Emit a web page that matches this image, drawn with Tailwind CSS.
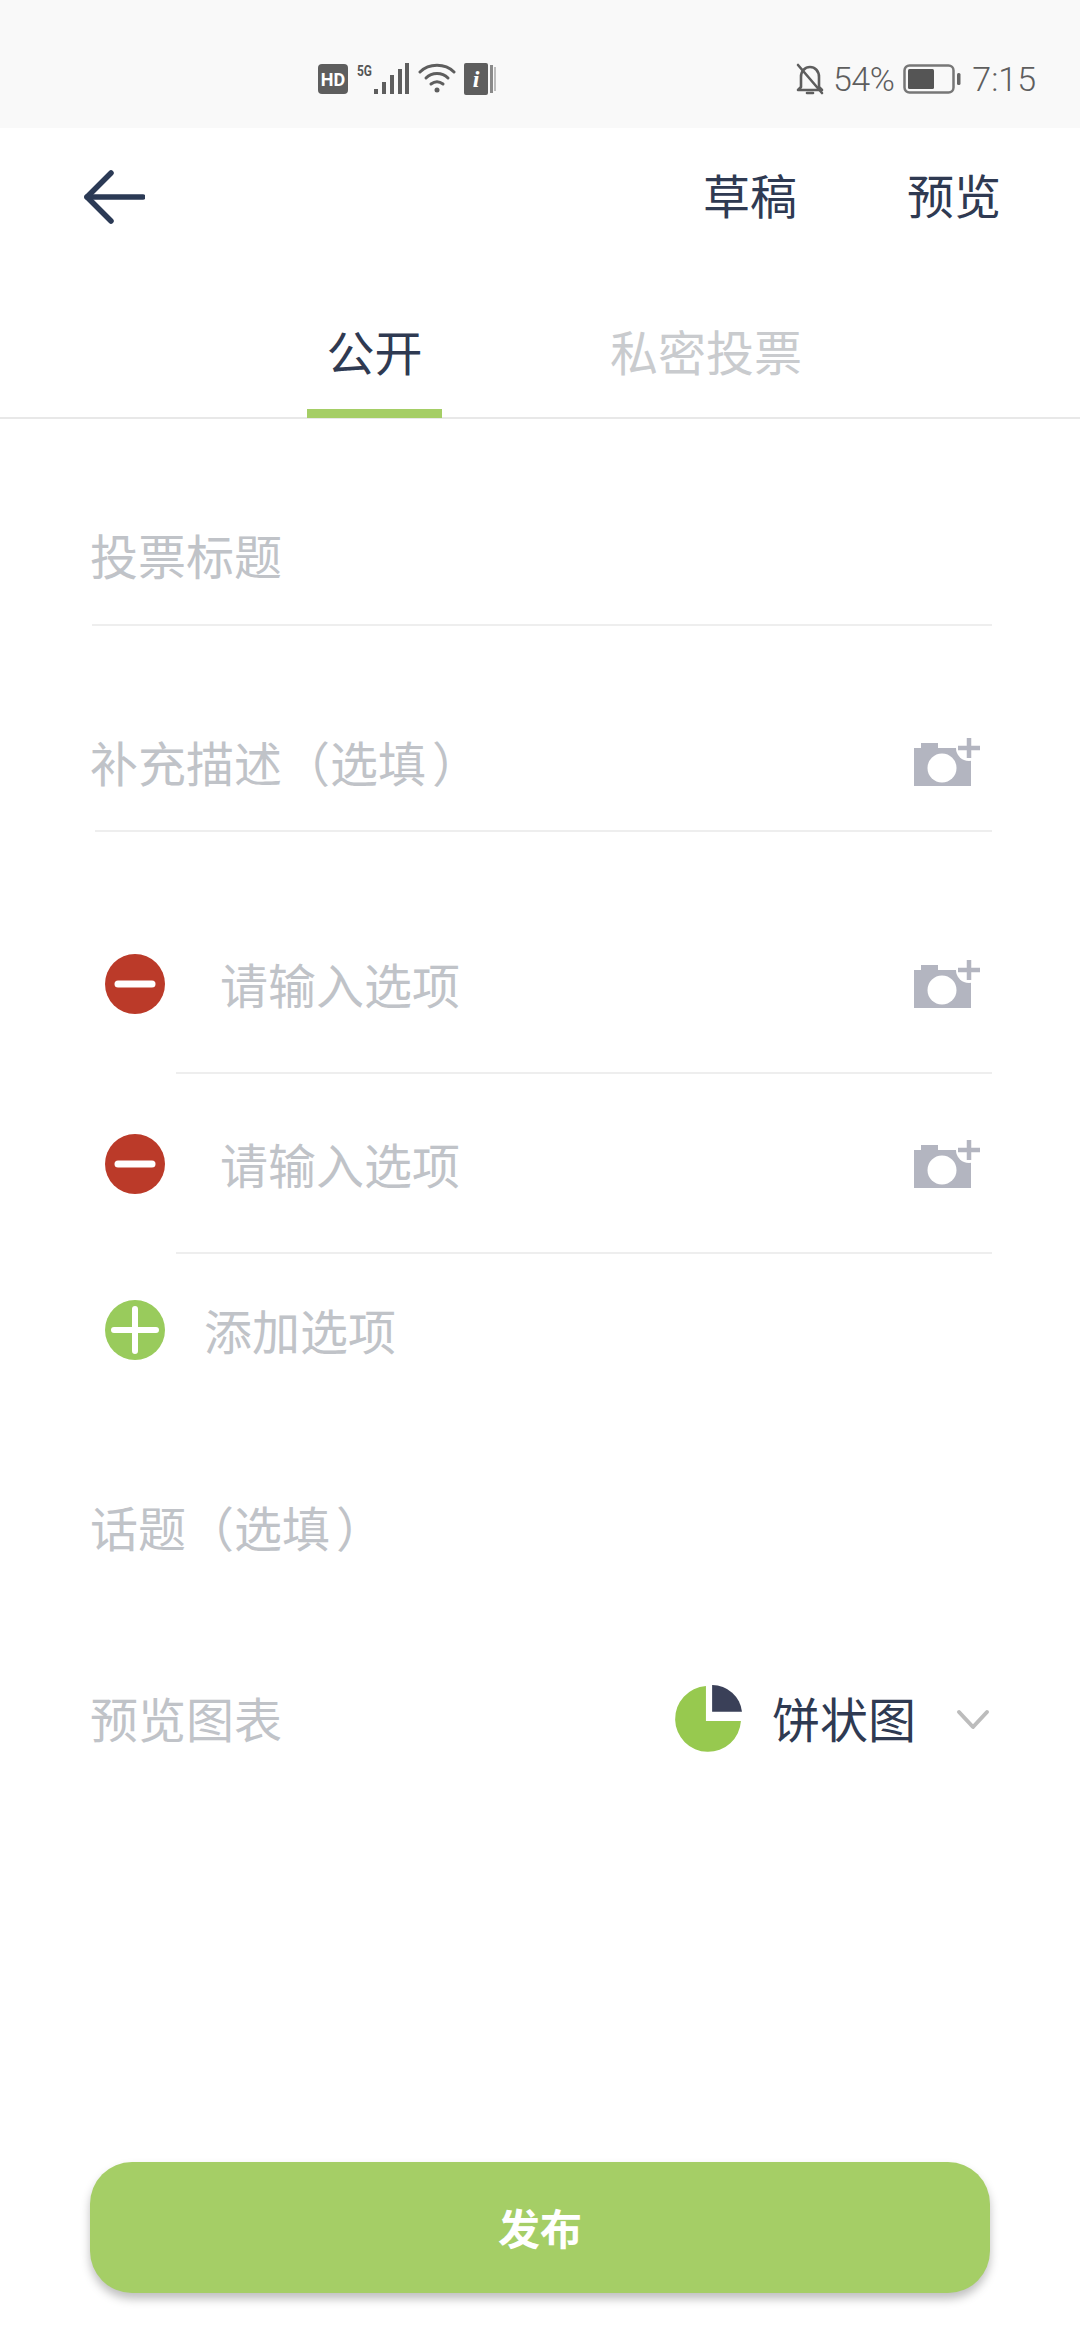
<!DOCTYPE html>
<html lang="zh-CN">
<head>
    <meta charset="UTF-8">
    <meta name="viewport" content="width=device-width, initial-scale=1.0">
    <title>发布投票</title>
    <script src="https://cdn.jsdelivr.net/npm/@tailwindcss/browser@4"></script>
</head>
<body class="bg-white">
<div class="flex flex-col w-[1080px] h-[2340px] bg-white font-['Noto_Sans_CJK_SC',sans-serif] overflow-hidden">
    <!-- Status bar -->
    <div class="flex items-center h-[128px] bg-[#f9f9f9] text-[#5e5e5e] font-['Roboto',sans-serif] font-light text-[34px] pt-[30px]">
        <div class="flex items-center ml-[318px] w-[180px] gap-[8px]">
            <span class="flex items-center justify-center w-[30px] h-[30px] rounded-[4px] bg-[#5e5e5e] text-white text-[18px] font-bold">HD</span>
            <svg width="54" height="32" viewBox="0 0 54 32" class="shrink-0">
                <text x="1" y="13" font-size="15" font-weight="700" font-family="Roboto" fill="#555" textLength="15" lengthAdjust="spacingAndGlyphs">5G</text>
                <g fill="#5e5e5e"><rect x="18" y="26" width="4" height="5"/><rect x="26" y="19" width="4" height="12"/><rect x="34" y="12" width="4" height="19"/><rect x="42" y="6" width="4" height="25"/><rect x="49" y="0" width="4" height="31"/></g>
            </svg>
            <svg width="38" height="32" viewBox="0 0 38 32" class="shrink-0" fill="none" stroke="#5e5e5e" stroke-width="3" stroke-linecap="round">
                <path d="M2 9C11 0 27 0 36 9"/><path d="M8 15C14 9 24 9 30 15"/><path d="M13 21C17 18 21 18 25 21"/><circle cx="19" cy="27" r="2.5" fill="#5e5e5e" stroke="none"/>
            </svg>
            <div class="flex items-center shrink-0">
                <span class="flex items-center justify-center w-[24px] h-[32px] rounded-[2px] bg-[#5e5e5e] text-white text-[24px] font-bold italic font-['Liberation_Serif',serif]">i</span>
                <span class="w-[3px] h-[28px] ml-[2px] bg-[#8a8a8a]"></span>
                <span class="w-[2px] h-[24px] ml-[1px] bg-[#bdbdbd]"></span>
            </div>
        </div>
        <div class="flex items-center ml-auto mr-[44px]">
            <svg width="30" height="34" viewBox="0 0 30 34" fill="none" stroke="#5e5e5e" stroke-width="2.6" stroke-linecap="round" stroke-linejoin="round">
                <path d="M6 25V15C6 9 10 5 15 5S24 9 24 15V25L27 28H3Z"/><path d="M12 31H18"/><path d="M3 3L27 31"/>
            </svg>
            <span class="ml-[8px] tracking-[-0.5px]">54%</span>
            <svg width="60" height="30" viewBox="0 0 60 30" class="ml-[9px]">
                <rect x="1.5" y="1.5" width="49" height="27" rx="5" fill="none" stroke="#777" stroke-width="2.5"/>
                <rect x="5" y="5" width="26" height="20" rx="1.5" fill="#555"/>
                <rect x="54" y="9" width="3.5" height="12" rx="1.5" fill="#666"/>
            </svg>
            <span class="ml-[9px]">7:15</span>
        </div>
    </div>

    <!-- Top nav -->
    <div class="flex items-center h-[138px] text-[#2f3a52] text-[47px]">
        <svg width="62" height="54" viewBox="0 0 62 54" class="ml-[83px]" fill="none" stroke="#2b3a55" stroke-width="5.5" stroke-linecap="round" stroke-linejoin="round">
            <path d="M60 27H4"/><path d="M28 3L4 27L28 51"/>
        </svg>
        <span class="ml-auto pb-[5px]">草稿</span>
        <span class="ml-[110px] mr-[79px] pb-[5px]">预览</span>
    </div>

    <!-- Tabs -->
    <div class="flex h-[153px] border-b-2 border-[#e8e8e8] text-[48px]">
        <div class="relative flex items-center justify-center w-[135px] ml-[307px] text-[#2f3a52] pt-[16px]">
            公开
            <div class="absolute left-0 right-0 -bottom-[1px] h-[9px] bg-[#a5ce66]"></div>
        </div>
        <div class="flex items-center ml-[168px] text-[#c9cbce] pt-[16px]">私密投票</div>
    </div>

    <!-- Form -->
    <div class="flex flex-1 flex-col text-[48px] text-[#c0c3c8]">
        <div class="flex items-center h-[139px] mt-[68px] ml-[92px] mr-[88px] border-b-2 border-[#eeeeee]">
            <span class="-ml-[2px] pb-[3px]">投票标题</span>
        </div>

        <div class="flex items-center h-[137px] mt-[69px] ml-[95px] mr-[88px] border-b-2 border-[#eeeeee]">
            <span class="-ml-[5px] pb-[4px]">补充描述（选填<span class="ml-[6px]">）</span></span>
            <svg width="70" height="50" viewBox="0 0 70 50" class="ml-auto mr-[10px]">
                <path d="M2 48V10H9V5H26V10H59V48Z" fill="#b3b5c0"/>
                <circle cx="30" cy="30" r="14.5" fill="#fff"/>
                <circle cx="57" cy="10" r="13" fill="#fff"/>
                <path d="M57 0V20M46 10H68" stroke="#b3b5c0" stroke-width="4.5"/>
            </svg>
        </div>

        <div class="flex h-[180px] mt-[62px] ml-[104px] mr-[88px]">
            <div class="flex items-center w-[72px]">
                <svg width="62" height="62" viewBox="0 0 62 62"><circle cx="31" cy="31" r="30" fill="#bb3a29"/><path d="M14 31H48" stroke="#fff" stroke-width="7" stroke-linecap="round"/></svg>
            </div>
            <div class="flex flex-1 items-center border-b-2 border-[#eeeeee] pl-[44px]">
                请输入选项
                <svg width="70" height="50" viewBox="0 0 70 50" class="ml-auto mr-[10px] mt-[3px]">
                    <path d="M2 48V10H9V5H26V10H59V48Z" fill="#b3b5c0"/>
                    <circle cx="30" cy="30" r="14.5" fill="#fff"/>
                    <circle cx="57" cy="10" r="13" fill="#fff"/>
                    <path d="M57 0V20M46 10H68" stroke="#b3b5c0" stroke-width="4.5"/>
                </svg>
            </div>
        </div>

        <div class="flex h-[180px] ml-[104px] mr-[88px]">
            <div class="flex items-center w-[72px]">
                <svg width="62" height="62" viewBox="0 0 62 62"><circle cx="31" cy="31" r="30" fill="#bb3a29"/><path d="M14 31H48" stroke="#fff" stroke-width="7" stroke-linecap="round"/></svg>
            </div>
            <div class="flex flex-1 items-center border-b-2 border-[#eeeeee] pl-[44px]">
                请输入选项
                <svg width="70" height="50" viewBox="0 0 70 50" class="ml-auto mr-[10px] mt-[3px]">
                    <path d="M2 48V10H9V5H26V10H59V48Z" fill="#b3b5c0"/>
                    <circle cx="30" cy="30" r="14.5" fill="#fff"/>
                    <circle cx="57" cy="10" r="13" fill="#fff"/>
                    <path d="M57 0V20M46 10H68" stroke="#b3b5c0" stroke-width="4.5"/>
                </svg>
            </div>
        </div>

        <div class="flex items-center h-[152px] ml-[104px]">
            <svg width="62" height="62" viewBox="0 0 62 62"><circle cx="31" cy="31" r="30" fill="#99cb5c"/><path d="M10 31H52M31 10V52" stroke="#fff" stroke-width="6" stroke-linecap="round"/></svg>
            <span class="ml-[38px] pb-[3px]">添加选项</span>
        </div>

        <div class="flex items-center h-[100px] mt-[73px] ml-[90px]"><span class="pb-[6px]">话题（选填<span class="ml-[6px]">）</span></span></div>

        <div class="flex items-center h-[100px] mt-[91px] ml-[90px] mr-[90px]">
            <span class="pb-[6px]">预览图表</span>
            <svg width="70" height="70" viewBox="0 0 68 68" class="ml-auto mb-[3px]">
                <path d="M32 2A32 32 0 1 0 66 36H32Z" fill="#97c94f"/>
                <path d="M38 1A29 29 0 0 1 67 27H38Z" fill="#3a4058"/>
            </svg>
            <span class="ml-[29px] pb-[6px] text-[#2f3a52]">饼状图</span>
            <svg width="34" height="22" viewBox="0 0 34 22" class="ml-[40px]" fill="none" stroke="#bcbcbc" stroke-width="4" stroke-linecap="round" stroke-linejoin="round">
                <path d="M3 3L17 18L31 3"/>
            </svg>
        </div>

        <button class="flex items-center justify-center h-[131px] mt-auto mb-[47px] mx-[90px] rounded-[42px] bg-[#a5ce66] text-white text-[42px] font-bold pb-[3px] shadow-[0_6px_10px_rgba(0,0,0,0.25)]">发布</button>
    </div>
</div>
</body>
</html>
